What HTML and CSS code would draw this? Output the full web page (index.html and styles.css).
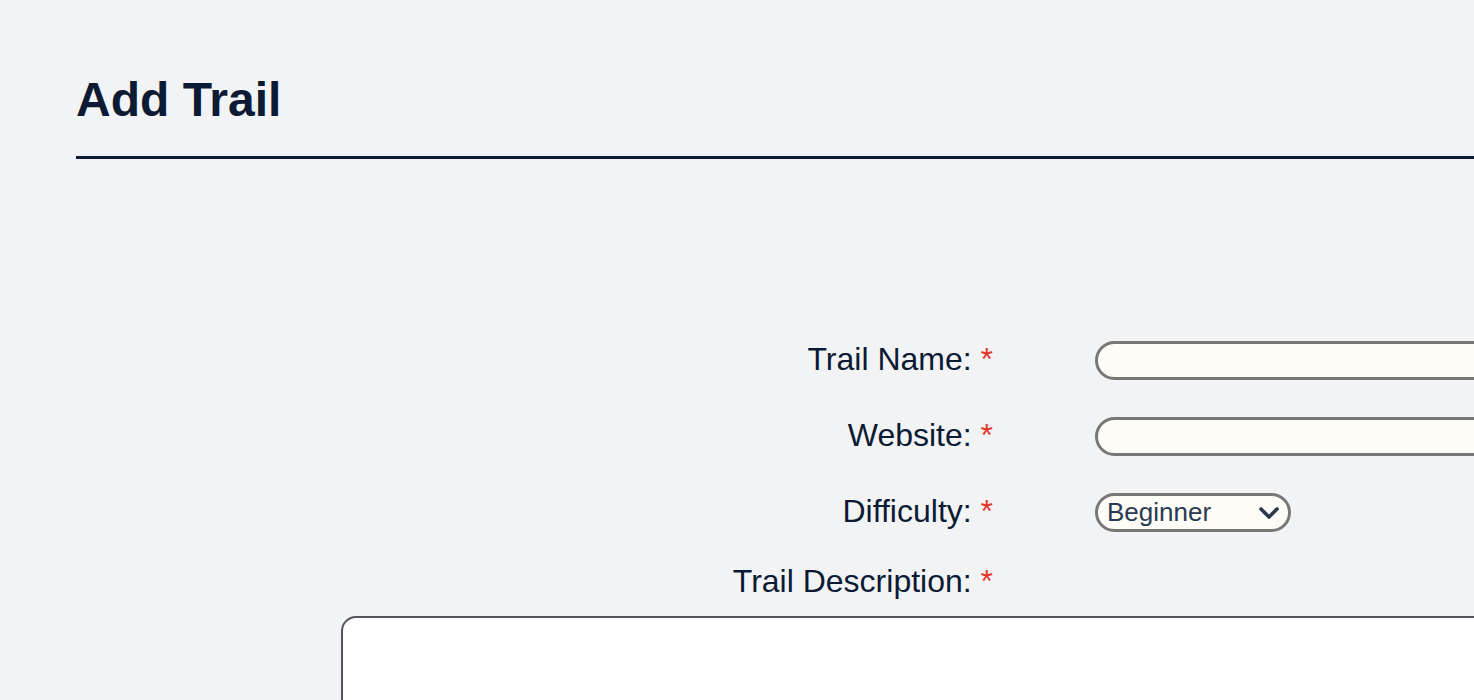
FILE: index.html
```html
<!DOCTYPE html>
<html lang="en">
<head>
<meta charset="utf-8">
<title>Add Trail</title>
<link rel="stylesheet" href="styles.css">
</head>
<body>
<main class="page">
  <header class="page-header">
    <h1 class="title">Add Trail</h1>
  </header>
  <form class="trail-form">
    <div class="field">
      <label class="label" for="name">Trail Name: <span class="req">*</span></label>
      <input class="text-input" id="name" type="text">
    </div>
    <div class="field">
      <label class="label" for="site">Website: <span class="req">*</span></label>
      <input class="text-input" id="site" type="text">
    </div>
    <div class="field">
      <label class="label" for="diff">Difficulty: <span class="req">*</span></label>
      <div class="select">
        <span class="select-value">Beginner</span>
        <svg class="chevron" viewBox="0 0 20 12" width="20" height="12"><path d="M2 2 L10 10 L18 2" fill="none" stroke="#2b3950" stroke-width="3.6" stroke-linecap="round" stroke-linejoin="round"/></svg>
      </div>
    </div>
    <div class="field field--desc">
      <label class="label" for="desc">Trail Description: <span class="req">*</span></label>
    </div>
    <textarea class="desc" id="desc"></textarea>
  </form>
</main>
</body>
</html>
```
FILE: styles.css
```css
html, body {
  margin: 0;
  padding: 0;
  background: #f2f3f5;
  overflow: hidden;
}
body {
  font-family: "Liberation Sans", Arial, sans-serif;
  color: #0c1a33;
}
.page {
  padding-left: 76px;
  width: 1800px;
}
.page-header {
  border-bottom: 3px solid #0c1a33;
  padding-top: 72px;
  padding-bottom: 28px;
}
.title {
  margin: 0;
  font-size: 48px;
  font-weight: bold;
  line-height: 56px;
  color: #0c1a33;
}
.trail-form {
  padding-top: 182px;
}
.field {
  display: flex;
  align-items: center;
  gap: 102px;
  height: 39px;
  margin-bottom: 37px;
}
.field--desc {
  height: 36px;
  margin-top: -6px;
  margin-bottom: 0;
}
.label {
  width: 917px;
  text-align: right;
  font-size: 32px;
  line-height: 36px;
  padding-bottom: 4px;
  color: #0c1a33;
}
.field--desc .label {
  padding-bottom: 0;
}
.req {
  color: #e5352a;
}
.text-input {
  box-sizing: border-box;
  width: 600px;
  height: 39px;
  border: 3px solid #777777;
  border-radius: 20px;
  background: #fdfcf7;
  outline: none;
  padding: 0 12px;
}
.select {
  box-sizing: border-box;
  width: 196px;
  height: 39px;
  border: 3px solid #777777;
  border-radius: 20px;
  background: #fdfcf7;
  display: flex;
  align-items: center;
  justify-content: space-between;
  padding: 0 9px 0 9px;
}
.select-value {
  font-size: 26px;
  color: #2b3950;
}
.chevron {
  display: block;
}
.desc {
  display: block;
  box-sizing: border-box;
  margin: 17px 0 0 265px;
  width: 1400px;
  height: 300px;
  border: 2px solid #57535c;
  border-radius: 15px;
  background: #ffffff;
  resize: none;
  outline: none;
}
```
